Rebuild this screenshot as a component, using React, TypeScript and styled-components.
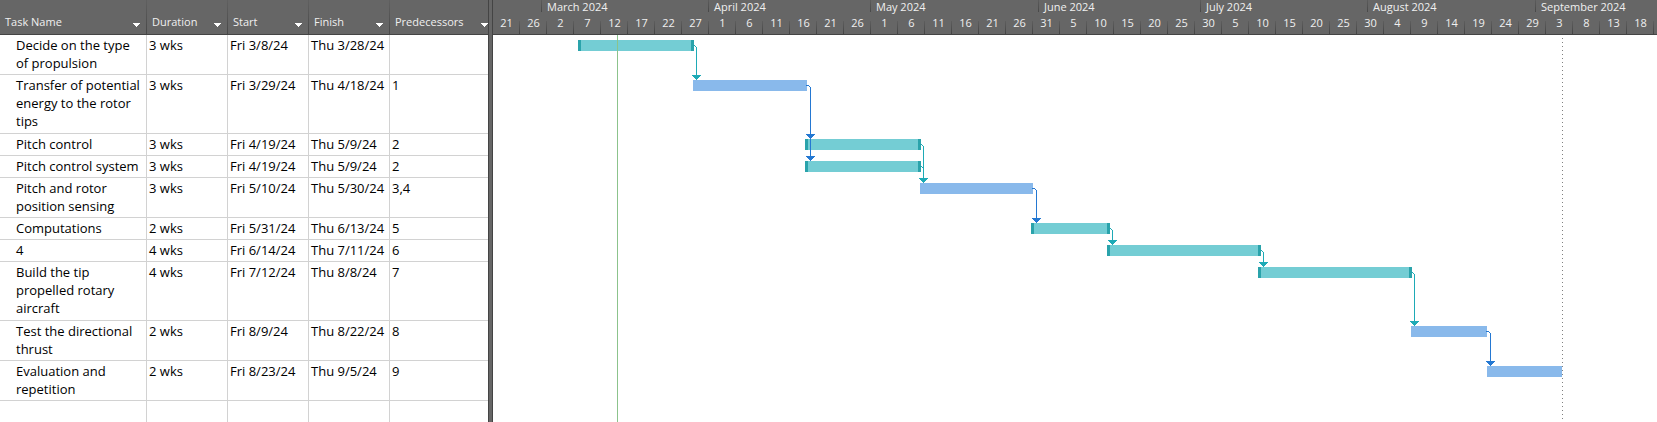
import React from "react";
import styled, { createGlobalStyle } from "styled-components";

const GlobalStyle = createGlobalStyle`
  *, *::before, *::after { box-sizing: border-box; }
  body { margin: 0; background: #fff; }
`;

const FONT = `"Open Sans", "Segoe UI", sans-serif`;
const SLATE = "#666666";
const EDGE = "#444444";
const RULE = "#d2d2d2";

const Page = styled.main`
  display: flex;
  min-height: 100vh;
  overflow: hidden;
`;

const SheetPane = styled.section`
  display: flex;
  flex: none;
  width: 488px;
  overflow: hidden;
`;

const Sheet = styled.table`
  flex: none;
  width: 495px;
  border-collapse: separate;
  border-spacing: 0;
  table-layout: fixed;
  font: 13px/18px ${FONT};
  color: #000;
`;

const Col = styled.col<{ $width: number }>`
  width: ${(p) => p.$width}px;
`;

const HeadCell = styled.th`
  height: 35px;
  padding: 10px 7px 0 5px;
  border-bottom: 1px solid ${EDGE};
  background: linear-gradient(#606060, #484848) right / 1px 100% no-repeat ${SLATE};
  font: 11px/16px ${FONT};
  color: #f0f0f0;
  text-align: left;
`;

const HeadInner = styled.div`
  display: flex;
  align-items: center;
  justify-content: space-between;
`;

const FilterButton = styled.button`
  display: flex;
  padding: 6px 0 0;
  border: 0;
  background: none;
  color: #fff;
`;

const Row = styled.tr<{ $height?: number }>`
  ${(p) => p.$height && `height: ${p.$height}px;`}
`;

const Cell = styled.td<{ $name?: boolean }>`
  padding: ${(p) => (p.$name ? "1px 3px 0 16px" : "1px 0 0 2px")};
  border-right: 1px solid ${RULE};
  border-bottom: 1px solid ${RULE};
  vertical-align: top;
  white-space: ${(p) => (p.$name ? "normal" : "nowrap")};

  tr:last-child > & {
    border-bottom: 0;
  }
`;

const Splitter = styled.div`
  flex: none;
  width: 5px;
  border: solid ${EDGE};
  border-width: 0 1px;
  background: ${SLATE};
`;

const ChartPane = styled.section`
  display: flex;
  flex: 1;
  flex-direction: column;
  min-width: 0;
  overflow: hidden;
`;

const Timescale = styled.header`
  display: flex;
  flex: none;
  flex-direction: column;
  height: 35px;
  border-bottom: 1px solid ${EDGE};
  background: ${SLATE};
  font: 11px/15px ${FONT};
  color: #f0f0f0;
  overflow: hidden;
`;

const Months = styled.div`
  display: flex;
  height: 15px;
`;

const Month = styled.div<{ $width: number }>`
  flex: none;
  width: ${(p) => p.$width}px;
  padding-left: 5px;
  background: linear-gradient(#5c5c5c, #484848) right top / 1px 12px no-repeat;
  line-height: 13px;
  white-space: nowrap;
`;

const Days = styled.div`
  display: flex;
  height: 19px;
`;

const Day = styled.div`
  flex: none;
  width: 27px;
  background: linear-gradient(#5e5e5e, #444444) right bottom / 1px 13px no-repeat;
  text-align: center;
`;

const Canvas = styled.svg`
  display: block;
  flex: 1;
  width: 100%;
  min-height: 387px;
`;

type Task = {
  name: string;
  duration: string;
  start: string;
  finish: string;
  pred: string;
  height: number;
  from: number;
  to: number;
  manual: boolean;
};

const task = (
  name: string, duration: string, start: string, finish: string, pred: string,
  height: number, from: number, to: number, manual: boolean,
): Task => ({ name, duration, start, finish, pred, height, from, to, manual });

const tasks: Task[] = [
  task("Decide on the type of propulsion", "3 wks", "Fri 3/8/24", "Thu 3/28/24", "", 40, 85, 201, true),
  task("Transfer of potential energy to the rotor tips", "3 wks", "Fri 3/29/24", "Thu 4/18/24", "1", 59, 200, 314, false),
  task("Pitch control", "3 wks", "Fri 4/19/24", "Thu 5/9/24", "2", 22, 312, 428, true),
  task("Pitch control system", "3 wks", "Fri 4/19/24", "Thu 5/9/24", "2", 22, 312, 428, true),
  task("Pitch and rotor position sensing", "3 wks", "Fri 5/10/24", "Thu 5/30/24", "3,4", 40, 427, 540, false),
  task("Computations", "2 wks", "Fri 5/31/24", "Thu 6/13/24", "5", 22, 538, 617, true),
  task("4", "4 wks", "Fri 6/14/24", "Thu 7/11/24", "6", 22, 614, 768, true),
  task("Build the tip propelled rotary aircraft", "4 wks", "Fri 7/12/24", "Thu 8/8/24", "7", 59, 765, 919, true),
  task("Test the directional thrust", "2 wks", "Fri 8/9/24", "Thu 8/22/24", "8", 40, 918, 994, false),
  task("Evaluation and repetition", "2 wks", "Fri 8/23/24", "Thu 9/5/24", "9", 40, 994, 1069, false),
];

const columns = [
  { label: "Task Name", width: 147 },
  { label: "Duration", width: 81 },
  { label: "Start", width: 81 },
  { label: "Finish", width: 81 },
  { label: "Predecessors", width: 105 },
];

const months = [
  { label: "", width: 49 },
  { label: "March 2024", width: 167 },
  { label: "April 2024", width: 162 },
  { label: "May 2024", width: 168 },
  { label: "June 2024", width: 162 },
  { label: "July 2024", width: 167 },
  { label: "August 2024", width: 168 },
  { label: "September 2024", width: 162 },
];

const days = [
  21, 26, 2, 7, 12, 17, 22, 27, 1, 6, 11, 16, 21, 26, 1, 6, 11, 16, 21, 26, 31, 5,
  10, 15, 20, 25, 30, 5, 10, 15, 20, 25, 30, 4, 9, 14, 19, 24, 29, 3, 8, 13, 18,
];

const tops = tasks.map((_, i) => tasks.slice(0, i).reduce((sum, t) => sum + t.height, 0) + 5);

function Bar({ index }: { index: number }) {
  const { from, to, manual } = tasks[index];
  const y = tops[index];
  return (
    <g>
      <rect x={from} y={y} width={to - from} height={11} fill={manual ? "#74cdd4" : "#89b9eb"} />
      {manual && <path d={`M${from} ${y}h3v11h-3zM${to - 3} ${y}h3v11h-3z`} fill="#2aa3ab" />}
    </g>
  );
}

function Link({ from, to }: { from: number; to: number }) {
  const { to: end, manual } = tasks[from];
  const y = tops[from] + 5;
  const tip = tops[to];
  const x = manual ? end + 2 : end + 3;
  const lead = manual ? `M${end} ${y}h1v1h-1z` : `M${end - 1} ${y}h3v1h-3z`;
  return (
    <path
      fill={manual ? "#1eaab6" : "#2478d2"}
      d={`${lead}M${x - 1} ${y + 1}h1v1h-1zM${x} ${y + 2}h1V${tip}h-1z
        M${x - 4} ${tip - 5}h9v1h-1v1h-1v1h-1v1h-1v1h-1v-1h-1v-1h-1v-1h-1v-1h-1z`}
    />
  );
}

const links = tasks.flatMap((t, to) =>
  t.pred.split(",").filter(Boolean).map((p) => ({ from: Number(p) - 1, to })),
);

export default function App() {
  return (
    <Page>
      <GlobalStyle />
      <SheetPane>
        <Sheet>
          <colgroup>
            {columns.map((c) => <Col key={c.label} $width={c.width} />)}
          </colgroup>
          <thead>
            <tr>
              {columns.map((c) => (
                <HeadCell key={c.label} scope="col">
                  <HeadInner>
                    {c.label}
                    <FilterButton type="button" aria-label={`Filter ${c.label}`}>
                      <svg width="7" height="4" shapeRendering="crispEdges" aria-hidden="true">
                        <path d="M0 0h7v1h-1v1h-1v1h-1v1h-1v-1h-1v-1h-1v-1h-1z" fill="currentColor" />
                      </svg>
                    </FilterButton>
                  </HeadInner>
                </HeadCell>
              ))}
            </tr>
          </thead>
          <tbody>
            {tasks.map((t) => (
              <Row key={t.name} $height={t.height}>
                <Cell $name>{t.name}</Cell>
                <Cell>{t.duration}</Cell>
                <Cell>{t.start}</Cell>
                <Cell>{t.finish}</Cell>
                <Cell>{t.pred}</Cell>
              </Row>
            ))}
            <Row>
              {columns.map((c) => <Cell key={c.label} />)}
            </Row>
          </tbody>
        </Sheet>
      </SheetPane>
      <Splitter role="separator" aria-orientation="vertical" />
      <ChartPane>
        <Timescale>
          <Months>
            {months.map((m) => <Month key={m.label} $width={m.width}>{m.label}</Month>)}
          </Months>
          <Days>
            {days.map((d, i) => <Day key={i}>{d}</Day>)}
          </Days>
        </Timescale>
        <Canvas shapeRendering="crispEdges" role="img" aria-label="Gantt chart">
          {tasks.map((t, i) => <Bar key={t.name} index={i} />)}
          {links.map((l) => <Link key={`${l.from}-${l.to}`} from={l.from} to={l.to} />)}
          <rect x="124" width="1" height="100%" fill="#8cc38c" />
          <line x1="1069.5" x2="1069.5" y1="3" y2="100%" stroke="#808080" strokeDasharray="1 3" />
        </Canvas>
      </ChartPane>
    </Page>
  );
}
